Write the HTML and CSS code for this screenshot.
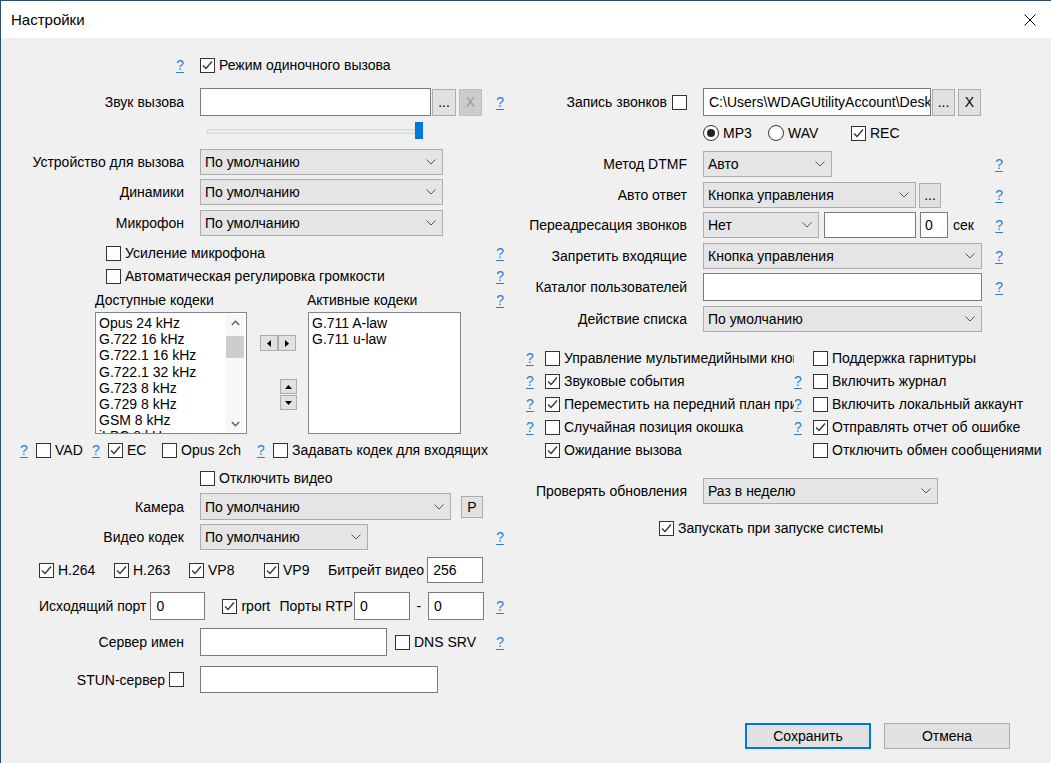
FILE: index.html
```html
<!DOCTYPE html>
<html lang="ru">
<head>
<meta charset="utf-8">
<title>Настройки</title>
<link rel="stylesheet" href="styles.css">
</head>
<body>
<div class="win">
  <div class="titlebar">
    <span class="title">Настройки</span>
    <svg class="close" width="12" height="12" viewBox="0 0 12 12"><path d="M0.5 0.5 L11.5 11.5 M11.5 0.5 L0.5 11.5"/></svg>
  </div>
  <div class="content">
    <!-- LEFT COLUMN -->
    <div class="col left">
      <div class="row l1">
        <span class="lbl"><a class="q">?</a></span>
        <span class="ck"><span class="cb on"><svg viewBox="0 0 13 13"><path d="M2 6.5 L5 9.5 L11 2.5"/></svg></span><span>Режим одиночного вызова</span></span>
      </div>
      <div class="row l2">
        <span class="lbl">Звук вызова</span>
        <span class="inp w-sound"></span>
        <span class="btn b-dots ml1">...</span>
        <span class="btn b-x dis ml3">X</span>
        <a class="q auto">?</a>
      </div>
      <div class="row l3">
        <div class="slider"><div class="track"></div><div class="thumb"></div></div>
      </div>
      <div class="row l4">
        <span class="lbl">Устройство для вызова</span>
        <span class="sel w-dev"><span>По умолчанию</span><svg class="chev" viewBox="0 0 10 6"><path d="M0.5 0.5 L5 5 L9.5 0.5"/></svg></span>
      </div>
      <div class="row l5">
        <span class="lbl">Динамики</span>
        <span class="sel w-dev"><span>По умолчанию</span><svg class="chev" viewBox="0 0 10 6"><path d="M0.5 0.5 L5 5 L9.5 0.5"/></svg></span>
      </div>
      <div class="row l6">
        <span class="lbl">Микрофон</span>
        <span class="sel w-dev"><span>По умолчанию</span><svg class="chev" viewBox="0 0 10 6"><path d="M0.5 0.5 L5 5 L9.5 0.5"/></svg></span>
      </div>
      <div class="row l7 pad-mic">
        <span class="ck"><span class="cb"></span><span>Усиление микрофона</span></span>
        <a class="q auto">?</a>
      </div>
      <div class="row l8 pad-mic">
        <span class="ck"><span class="cb"></span><span>Автоматическая регулировка громкости</span></span>
        <a class="q auto">?</a>
      </div>
      <div class="row l9 pad-codec">
        <span class="codec-head">Доступные кодеки</span>
        <span>Активные кодеки</span>
        <a class="q auto">?</a>
      </div>
      <div class="row l10 pad-codec top">
        <div class="list w-avail">
          <div class="items">
            <div>Opus 24 kHz</div>
            <div>G.722 16 kHz</div>
            <div>G.722.1 16 kHz</div>
            <div>G.722.1 32 kHz</div>
            <div>G.723 8 kHz</div>
            <div>G.729 8 kHz</div>
            <div>GSM 8 kHz</div>
            <div>iLBC 8 kHz</div>
          </div>
          <div class="sb">
            <span class="sb-arrow"><svg width="9" height="6" viewBox="0 0 9 6"><path d="M0.8 5 L4.5 1.2 L8.2 5"/></svg></span>
            <span class="sb-gap"></span>
            <span class="sb-thumb"></span>
            <span class="sb-rest"></span>
            <span class="sb-arrow"><svg width="9" height="6" viewBox="0 0 9 6"><path d="M0.8 1 L4.5 4.8 L8.2 1"/></svg></span>
          </div>
        </div>
        <div class="movers">
          <div class="pair">
            <span class="mini"><svg width="4" height="7" viewBox="0 0 4 7"><path d="M4 0 L0 3.5 L4 7Z"/></svg></span>
            <span class="mini"><svg width="4" height="7" viewBox="0 0 4 7"><path d="M0 0 L4 3.5 L0 7Z"/></svg></span>
          </div>
          <div class="updown">
            <span class="mini"><svg width="7" height="4" viewBox="0 0 7 4"><path d="M0 4 L3.5 0 L7 4Z"/></svg></span>
            <span class="mini"><svg width="7" height="4" viewBox="0 0 7 4"><path d="M0 0 L3.5 4 L7 0Z"/></svg></span>
          </div>
        </div>
        <div class="list w-active">
          <div class="items">
            <div>G.711 A-law</div>
            <div>G.711 u-law</div>
          </div>
        </div>
      </div>
      <div class="row l11 pad-vad">
        <a class="q c-q1">?</a>
        <span class="ck c-vad"><span class="cb"></span><span>VAD</span></span>
        <a class="q c-q2">?</a>
        <span class="ck c-ec"><span class="cb on"><svg viewBox="0 0 13 13"><path d="M2 6.5 L5 9.5 L11 2.5"/></svg></span><span>EC</span></span>
        <span class="ck c-opus"><span class="cb"></span><span>Opus 2ch</span></span>
        <a class="q c-q3">?</a>
        <span class="ck"><span class="cb"></span><span>Задавать кодек для входящих</span></span>
      </div>
      <div class="row l12 pad-ctl">
        <span class="ck"><span class="cb"></span><span>Отключить видео</span></span>
      </div>
      <div class="row l13">
        <span class="lbl">Камера</span>
        <span class="sel w-cam"><span>По умолчанию</span><svg class="chev" viewBox="0 0 10 6"><path d="M0.5 0.5 L5 5 L9.5 0.5"/></svg></span>
        <span class="btn b-p">P</span>
      </div>
      <div class="row l14">
        <span class="lbl">Видео кодек</span>
        <span class="sel w-vcodec"><span>По умолчанию</span><svg class="chev" viewBox="0 0 10 6"><path d="M0.5 0.5 L5 5 L9.5 0.5"/></svg></span>
        <a class="q auto">?</a>
      </div>
      <div class="row l15 pad-h264">
        <span class="ck c-h264"><span class="cb on"><svg viewBox="0 0 13 13"><path d="M2 6.5 L5 9.5 L11 2.5"/></svg></span><span>H.264</span></span>
        <span class="ck c-h263"><span class="cb on"><svg viewBox="0 0 13 13"><path d="M2 6.5 L5 9.5 L11 2.5"/></svg></span><span>H.263</span></span>
        <span class="ck c-vp8"><span class="cb on"><svg viewBox="0 0 13 13"><path d="M2 6.5 L5 9.5 L11 2.5"/></svg></span><span>VP8</span></span>
        <span class="ck c-vp9"><span class="cb on"><svg viewBox="0 0 13 13"><path d="M2 6.5 L5 9.5 L11 2.5"/></svg></span><span>VP9</span></span>
        <span>Битрейт видео</span>
        <span class="inp w-num ml3">256</span>
      </div>
      <div class="row l16 pad-port">
        <span>Исходящий порт</span>
        <span class="inp w-port ml4">0</span>
        <span class="ck c-rport"><span class="cb on"><svg viewBox="0 0 13 13"><path d="M2 6.5 L5 9.5 L11 2.5"/></svg></span><span>rport</span></span>
        <span>Порты RTP</span>
        <span class="inp w-num ml1">0</span>
        <span class="dash">-</span>
        <span class="inp w-num">0</span>
        <a class="q auto">?</a>
      </div>
      <div class="row l17">
        <span class="lbl">Сервер имен</span>
        <span class="inp w-dns"></span>
        <span class="ck ml8"><span class="cb"></span><span>DNS SRV</span></span>
        <a class="q auto">?</a>
      </div>
      <div class="row l18">
        <span class="lbl">STUN-сервер<span class="cb ml4"></span></span>
        <span class="inp w-stun"></span>
      </div>
    </div>

    <!-- RIGHT COLUMN -->
    <div class="col right">
      <div class="row q1">
        <span class="rlbl">Запись звонков<span class="cb ml5"></span></span>
        <span class="inp w-path">C:\Users\WDAGUtilityAccount\Desktop</span>
        <span class="btn b-dots ml1">...</span>
        <span class="btn b-x ml3">X</span>
      </div>
      <div class="row q2 pad-rctl">
        <span class="ck c-mp3"><span class="rb on"></span><span>MP3</span></span>
        <span class="ck c-wav"><span class="rb"></span><span>WAV</span></span>
        <span class="ck"><span class="cb on"><svg viewBox="0 0 13 13"><path d="M2 6.5 L5 9.5 L11 2.5"/></svg></span><span>REC</span></span>
      </div>
      <div class="row q3">
        <span class="rlbl">Метод DTMF</span>
        <span class="sel w-dtmf"><span>Авто</span><svg class="chev" viewBox="0 0 10 6"><path d="M0.5 0.5 L5 5 L9.5 0.5"/></svg></span>
        <a class="q auto">?</a>
      </div>
      <div class="row q4">
        <span class="rlbl">Авто ответ</span>
        <span class="sel w-auto"><span>Кнопка управления</span><svg class="chev" viewBox="0 0 10 6"><path d="M0.5 0.5 L5 5 L9.5 0.5"/></svg></span>
        <span class="btn b-dots2 ml3">...</span>
        <a class="q auto">?</a>
      </div>
      <div class="row q5">
        <span class="rlbl">Переадресация звонков</span>
        <span class="sel w-fwd"><span>Нет</span><svg class="chev" viewBox="0 0 10 6"><path d="M0.5 0.5 L5 5 L9.5 0.5"/></svg></span>
        <span class="inp w-fwdnum ml5"></span>
        <span class="inp w-sec ml4">0</span>
        <span class="ml5">сек</span>
        <a class="q auto">?</a>
      </div>
      <div class="row q6">
        <span class="rlbl">Запретить входящие</span>
        <span class="sel w-wide"><span>Кнопка управления</span><svg class="chev" viewBox="0 0 10 6"><path d="M0.5 0.5 L5 5 L9.5 0.5"/></svg></span>
        <a class="q auto">?</a>
      </div>
      <div class="row q7">
        <span class="rlbl">Каталог пользователей</span>
        <span class="inp w-wide"></span>
        <a class="q auto">?</a>
      </div>
      <div class="row q8">
        <span class="rlbl">Действие списка</span>
        <span class="sel w-wide"><span>По умолчанию</span><svg class="chev" viewBox="0 0 10 6"><path d="M0.5 0.5 L5 5 L9.5 0.5"/></svg></span>
      </div>

      <div class="row q9 pad-grid">
        <a class="q g-h1">?</a>
        <span class="ck g-c1"><span class="cb"></span><span>Управление мультимедийными кнопками</span></span>
        <span class="g-h2"></span>
        <span class="ck"><span class="cb"></span><span>Поддержка гарнитуры</span></span>
      </div>
      <div class="row q10 pad-grid">
        <a class="q g-h1">?</a>
        <span class="ck g-c1"><span class="cb on"><svg viewBox="0 0 13 13"><path d="M2 6.5 L5 9.5 L11 2.5"/></svg></span><span>Звуковые события</span></span>
        <a class="q g-h2">?</a>
        <span class="ck"><span class="cb"></span><span>Включить журнал</span></span>
      </div>
      <div class="row q11 pad-grid">
        <a class="q g-h1">?</a>
        <span class="ck g-c1"><span class="cb on"><svg viewBox="0 0 13 13"><path d="M2 6.5 L5 9.5 L11 2.5"/></svg></span><span>Переместить на передний план при вызове</span></span>
        <a class="q g-h2">?</a>
        <span class="ck"><span class="cb"></span><span>Включить локальный аккаунт</span></span>
      </div>
      <div class="row q12 pad-grid">
        <a class="q g-h1">?</a>
        <span class="ck g-c1"><span class="cb"></span><span>Случайная позиция окошка</span></span>
        <a class="q g-h2">?</a>
        <span class="ck"><span class="cb on"><svg viewBox="0 0 13 13"><path d="M2 6.5 L5 9.5 L11 2.5"/></svg></span><span>Отправлять отчет об ошибке</span></span>
      </div>
      <div class="row q13 pad-grid">
        <span class="g-h1"></span>
        <span class="ck g-c1"><span class="cb on"><svg viewBox="0 0 13 13"><path d="M2 6.5 L5 9.5 L11 2.5"/></svg></span><span>Ожидание вызова</span></span>
        <span class="g-h2"></span>
        <span class="ck"><span class="cb"></span><span>Отключить обмен сообщениями</span></span>
      </div>

      <div class="row q14">
        <span class="rlbl">Проверять обновления</span>
        <span class="sel w-upd"><span>Раз в неделю</span><svg class="chev" viewBox="0 0 10 6"><path d="M0.5 0.5 L5 5 L9.5 0.5"/></svg></span>
      </div>
      <div class="row q15 pad-start">
        <span class="ck"><span class="cb on"><svg viewBox="0 0 13 13"><path d="M2 6.5 L5 9.5 L11 2.5"/></svg></span><span>Запускать при запуске системы</span></span>
      </div>

      <div class="row actions">
        <span class="btn dlg default">Сохранить</span>
        <span class="btn dlg">Отмена</span>
      </div>
    </div>
  </div>
</div>
</body>
</html>
```

FILE: styles.css
```css
html, body {
  margin: 0;
  padding: 0;
}
body {
  width: 1051px;
  height: 763px;
  overflow: hidden;
  background: #f0f0f0;
  font-family: "Liberation Sans", Arial, sans-serif;
  font-size: 14px;
  color: #000;
}
.win {
  height: 763px;
  box-sizing: border-box;
  border-top: 1px solid #2b4e74;
  border-left: 1px solid #2b4e74;
  display: flex;
  flex-direction: column;
  background: #f0f0f0;
}
.titlebar {
  flex: none;
  height: 37px;
  background: #fff;
  display: flex;
  align-items: center;
  justify-content: space-between;
  padding: 0 15px 0 10px;
}
.title {
  font-size: 15px;
  padding-bottom: 1px;
}
.close path {
  stroke: #000;
  stroke-width: 1;
  fill: none;
}
.content {
  flex: 1;
  display: flex;
  min-width: 0;
}
.col {
  display: flex;
  flex-direction: column;
  min-width: 0;
}
.left {
  width: 519px;
  flex: none;
  box-sizing: border-box;
  padding-right: 16px;
}
.right {
  width: 531px;
  flex: none;
  box-sizing: border-box;
  padding-right: 48px;
}
.row {
  display: flex;
  align-items: center;
  flex: none;
  white-space: nowrap;
  min-width: 0;
}
.row > * { flex-shrink: 0; }
.row.top { align-items: flex-start; }

/* label cells */
.lbl {
  width: 183px;
  margin-right: 16px;
  flex: none;
  display: flex;
  align-items: center;
  justify-content: flex-end;
}
.rlbl {
  width: 167px;
  margin-right: 16px;
  flex: none;
  display: flex;
  align-items: center;
  justify-content: flex-end;
}

/* help link */
.q {
  color: #2a7dd4;
  text-decoration: underline;
  text-underline-offset: 2px;
  flex: none;
}
.auto { margin-left: auto; }

/* checkbox / radio */
.ck {
  display: inline-flex;
  align-items: center;
  flex: none;
}
.ck > span + span { margin-left: 4px; }
.cb {
  width: 15px;
  height: 15px;
  box-sizing: border-box;
  border: 1px solid #333;
  background: #fff;
  flex: none;
  display: inline-block;
  position: relative;
}
.cb svg {
  position: absolute;
  left: 0;
  top: 0;
  width: 13px;
  height: 13px;
}
.cb svg path {
  fill: none;
  stroke: #333;
  stroke-width: 1.3;
}
.rb {
  width: 16px;
  height: 16px;
  box-sizing: border-box;
  border: 1px solid #333;
  border-radius: 50%;
  background: #fff;
  flex: none;
  display: inline-flex;
  align-items: center;
  justify-content: center;
}
.rb.on::after {
  content: "";
  width: 8px;
  height: 8px;
  border-radius: 50%;
  background: #222;
}

/* inputs */
.inp {
  box-sizing: border-box;
  height: 100%;
  border: 1px solid #7a7a7a;
  background: #fff;
  padding: 0 5px;
  display: flex;
  align-items: center;
  overflow: hidden;
  flex: none;
}
.sel {
  box-sizing: border-box;
  height: 100%;
  border: 1px solid #adadad;
  background: #e5e5e5;
  padding: 0 6px 0 4px;
  display: flex;
  align-items: center;
  justify-content: space-between;
  flex: none;
}
.chev {
  width: 10px;
  height: 6px;
}
.chev path {
  fill: none;
  stroke: #555;
  stroke-width: 1;
}
.btn {
  box-sizing: border-box;
  border: 1px solid #adadad;
  background: #e1e1e1;
  display: flex;
  align-items: center;
  justify-content: center;
  flex: none;
  color: #000;
}
.btn.dis {
  background: #cccccc;
  border-color: #bfbfbf;
  color: #9a9a9a;
}

/* spacing helpers */
.ml1 { margin-left: 1px; }
.ml3 { margin-left: 3px; }
.ml4 { margin-left: 4px; }
.ml5 { margin-left: 5px; }
.ml8 { margin-left: 8px; }

/* LEFT rows */
.l1 { margin-top: 19px; height: 16px; }
.l2 { margin-top: 15px; height: 28px; }
.l3 { margin-top: 6px; height: 17px; }
.l4 { margin-top: 10px; height: 26px; }
.l5 { margin-top: 4px; height: 26px; }
.l6 { margin-top: 5px; height: 26px; }
.l7 { margin-top: 9px; height: 16px; }
.l8 { margin-top: 7px; height: 16px; }
.l9 { margin-top: 8px; height: 16px; }
.l10 { margin-top: 4px; height: 122px; }
.l11 { margin-top: 8px; height: 16px; }
.l12 { margin-top: 12px; height: 16px; }
.l13 { margin-top: 7px; height: 27px; }
.l14 { margin-top: 4px; height: 26px; }
.l15 { margin-top: 7px; height: 26px; }
.l16 { margin-top: 9px; height: 28px; }
.l17 { margin-top: 8px; height: 28px; }
.l18 { margin-top: 10px; height: 27px; }

.pad-mic { padding-left: 105px; }
.pad-codec { padding-left: 94px; }
.pad-vad { padding-left: 19px; }
.pad-ctl { padding-left: 199px; }
.pad-h264 { padding-left: 38px; }
.pad-port { padding-left: 38px; }

.w-sound { width: 231px; }
.b-dots { width: 24px; height: 27px; }
.b-x { width: 23px; height: 27px; }
.b-dots2 { width: 22px; height: 25px; }
.w-dev { width: 243px; }
.w-cam { width: 251px; }
.b-p { width: 22px; height: 22px; margin-left: 10px; }
.w-vcodec { width: 168px; }
.w-num { width: 56px; }
.w-port { width: 55px; }
.w-dns { width: 187px; }
.w-stun { width: 238px; }

/* slider */
.slider {
  position: relative;
  margin-left: 206px;
  width: 216px;
  height: 17px;
}
.track {
  position: absolute;
  left: 0;
  right: 4px;
  top: 7px;
  height: 3px;
  background: #e7eaea;
  border: 1px solid #d6d6d6;
}
.thumb {
  position: absolute;
  right: 0;
  top: 0;
  width: 8px;
  height: 17px;
  background: #0078d7;
}

/* codec lists */
.codec-head { width: 212px; flex: none; }
.list {
  box-sizing: border-box;
  height: 122px;
  border: 1px solid #828790;
  background: #fff;
  display: flex;
  overflow: hidden;
  flex: none;
}
.w-avail { width: 152px; }
.w-active { width: 153px; }
.items {
  flex: 1;
  padding: 2px 0 0 3px;
  line-height: 16.2px;
  overflow: hidden;
}
.sb {
  width: 18px;
  margin: 1px 2px 1px 0;
  background: #f7f7f7;
  display: flex;
  flex-direction: column;
  align-items: center;
}
.sb-arrow {
  height: 17px;
  width: 18px;
  display: flex;
  align-items: center;
  justify-content: center;
  flex: none;
}
.sb-arrow path {
  fill: none;
  stroke: #606060;
  stroke-width: 1.4;
}
.sb-gap { height: 5px; flex: none; }
.sb-thumb {
  width: 18px;
  height: 22px;
  background: #cdcdcd;
  flex: none;
}
.sb-rest { flex: 1; }

.movers {
  width: 37px;
  margin: 0 11px 0 13px;
  display: flex;
  flex-direction: column;
  padding-top: 23px;
}
.pair { display: flex; }
.updown {
  display: flex;
  flex-direction: column;
  align-self: flex-end;
  margin-top: 28px;
  gap: 1px;
}
.mini {
  box-sizing: border-box;
  width: 18px;
  height: 16px;
  border: 1px solid #adadad;
  background: #e1e1e1;
  display: flex;
  align-items: center;
  justify-content: center;
}
.updown .mini { width: 17px; height: 15px; }
.mini path { fill: #000; }

/* vad row */
.c-q1 { width: 16px; }
.c-vad { width: 56px; }
.c-q2 { width: 16px; }
.c-ec { width: 54px; }
.c-opus { width: 95px; }
.c-q3 { width: 16px; }

/* video row */
.c-h264 { width: 75px; }
.c-h263 { width: 75px; }
.c-vp8 { width: 75px; }
.c-vp9 { width: 64px; }

.c-rport { width: 57px; margin-left: 17px; }
.dash { width: 18px; text-align: center; flex: none; }

/* RIGHT rows */
.q1 { margin-top: 50px; height: 28px; }
.q2 { margin-top: 9px; height: 16px; }
.q3 { margin-top: 10px; height: 26px; }
.q4 { margin-top: 5px; height: 26px; }
.q5 { margin-top: 4px; height: 26px; }
.q6 { margin-top: 5px; height: 26px; }
.q7 { margin-top: 4px; height: 28px; }
.q8 { margin-top: 5px; height: 26px; }
.q9 { margin-top: 18px; height: 16px; }
.q10 { margin-top: 7px; height: 16px; }
.q11 { margin-top: 7px; height: 16px; }
.q12 { margin-top: 7px; height: 16px; }
.q13 { margin-top: 7px; height: 16px; }
.q14 { margin-top: 20px; height: 26px; }
.q15 { margin-top: 16px; height: 16px; }

.pad-rctl { padding-left: 183px; }
.pad-grid { padding-left: 6px; }
.pad-start { padding-left: 139px; }

.w-path { width: 228px; }
.q1 .b-dots { width: 23px; }
.w-dtmf { width: 129px; }
.w-auto { width: 213px; }
.w-fwd { width: 116px; }
.w-fwdnum { width: 92px; }
.w-sec { width: 28px; padding: 0 4px; }
.w-wide { width: 279px; }
.w-upd { width: 235px; }

.c-mp3 { width: 65px; }
.c-wav { width: 83px; }

.g-h1 { width: 19px; flex: none; }
.g-c1 { width: 249px; overflow: hidden; }
.g-h2 { width: 19px; flex: none; }

.actions {
  margin-top: auto;
  margin-bottom: 14px;
  padding-left: 225px;
  height: 26px;
  gap: 13px;
}
.dlg {
  width: 126px;
  height: 26px;
}
.dlg.default {
  border: 2px solid #0078d7;
}
```
